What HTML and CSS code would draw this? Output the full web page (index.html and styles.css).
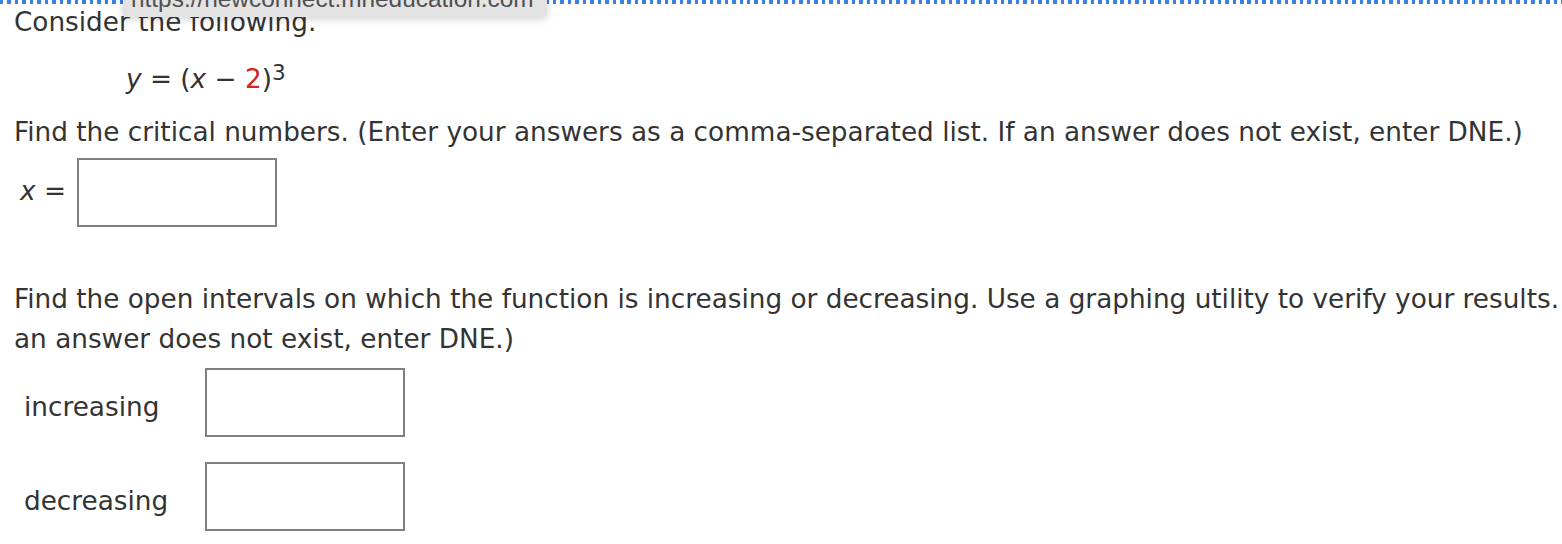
FILE: index.html
```html
<!DOCTYPE html>
<html>
<head>
<meta charset="utf-8">
<link rel="stylesheet" href="styles.css">
</head>
<body>
<div class="focus-line"></div>
<div class="tooltip"><span class="tooltip-text">https://newconnect.mheducation.com</span></div>
<div class="content">
  <p class="line intro">Consider the following.</p>
  <p class="line equation"><i>y</i> = (<i>x</i> − <span class="red">2</span>)<sup>3</sup></p>
  <p class="line q1">Find the critical numbers. (Enter your answers as a comma-separated list. If an answer does not exist, enter DNE.)</p>
  <div class="row crit">
    <span class="crit-label"><i>x</i> =</span>
    <div class="answer-box"></div>
  </div>
  <p class="line q2">Find the open intervals on which the function is increasing or decreasing. Use a graphing utility to verify your results.<br>an answer does not exist, enter DNE.)</p>
  <div class="interval-grid">
    <span class="int-label">increasing</span>
    <div class="answer-box"></div>
    <span class="int-label">decreasing</span>
    <div class="answer-box"></div>
  </div>
</div>
</body>
</html>
```

FILE: styles.css
```css
html, body {
  margin: 0;
  padding: 0;
  background: #ffffff;
}
body {
  font-family: "DejaVu Sans", Verdana, sans-serif;
  font-size: 26.3px;
  color: #333333;
  position: relative;
  overflow: hidden;
  width: 1562px;
  height: 544px;
}
.focus-line {
  position: absolute;
  left: 0;
  top: 0;
  width: 1562px;
  height: 4px;
  background: repeating-linear-gradient(to right, #3b80e0 0 3.5px, transparent 3.5px 7.47px);
}
.tooltip {
  position: absolute;
  left: 123px;
  top: -20px;
  width: 424px;
  height: 37px;
  background: #e3e3e3;
  border-radius: 3px;
  box-shadow: 0 2px 8px rgba(0, 0, 0, 0.18);
  overflow: hidden;
}
.tooltip-text {
  display: block;
  font-family: "Liberation Sans", Arial, sans-serif;
  font-size: 24.4px;
  color: #505050;
  padding-left: 8px;
  line-height: 24px;
  margin-top: 7px;
  white-space: nowrap;
}
.content {
  padding: 2px 0 0 14px;
}
.line {
  margin: 0;
  line-height: 40px;
}
.equation {
  margin-top: 17px;
  padding-left: 112px;
}
.equation i, .crit-label i {
  font-style: italic;
}
.red {
  color: #d0281e;
}
sup {
  font-size: 0.82em;
  line-height: 0;
  vertical-align: 0.36em;
}
.q1 {
  margin-top: 13px;
}
.row {
  display: flex;
}
.crit {
  margin-top: 6px;
  align-items: flex-start;
}
.crit-label {
  line-height: 40px;
  padding: 13px 0 0 6px;
  width: 57px;
}
.answer-box {
  box-sizing: border-box;
  width: 200px;
  height: 69px;
  border: 2px solid #808080;
  background: #ffffff;
}
.q2 {
  margin-top: 52px;
  white-space: nowrap;
}
.interval-grid {
  display: grid;
  grid-template-columns: 191px 200px;
  row-gap: 25px;
  margin-top: 9px;
}
.int-label {
  line-height: 40px;
  padding: 19px 0 0 10px;
}
```
